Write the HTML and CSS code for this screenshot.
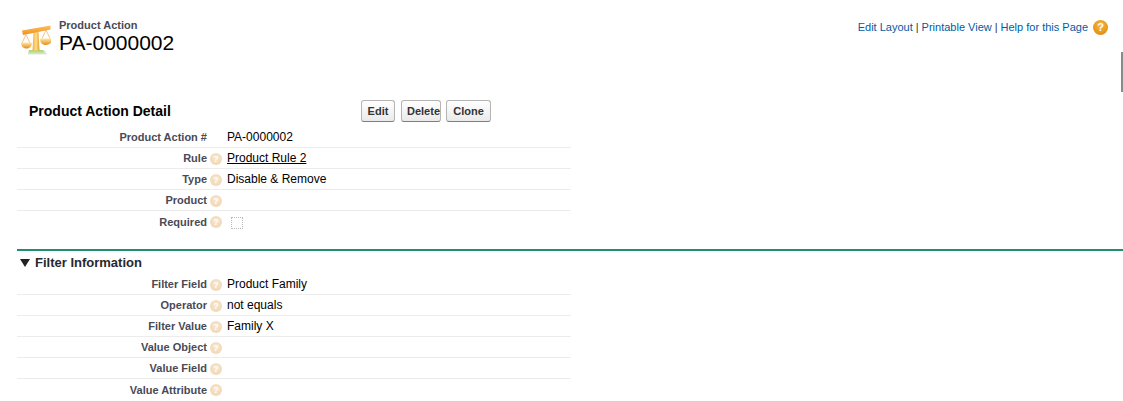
FILE: index.html
```html
<!DOCTYPE html>
<html lang="en">
<head>
<meta charset="utf-8">
<title>Product Action PA-0000002</title>
<link rel="stylesheet" href="styles.css">
</head>
<body>
<header class="page-head">
  <svg class="scale" width="30" height="33" viewBox="0 0 30 33" aria-hidden="true">
    <defs>
      <linearGradient id="beam" x1="0" y1="0" x2="0" y2="1"><stop offset="0" stop-color="#fbc25f"/><stop offset="1" stop-color="#ee8f1c"/></linearGradient>
      <linearGradient id="post" x1="0" y1="0" x2="1" y2="0"><stop offset="0" stop-color="#f9a93a"/><stop offset=".5" stop-color="#fde08e"/><stop offset="1" stop-color="#ef9a25"/></linearGradient>
      <linearGradient id="pan" x1="0" y1="0" x2="0" y2="1"><stop offset="0" stop-color="#fde8a8"/><stop offset="1" stop-color="#e98c1a"/></linearGradient>
      <linearGradient id="base" x1="0" y1="0" x2="0" y2="1"><stop offset="0" stop-color="#9fd46d"/><stop offset="1" stop-color="#d5ecc0"/></linearGradient>
    </defs>
    <path d="M8 26.500H24L26 30.500H7Z" fill="#c8c8c0" opacity=".5"/>
    <path d="M8 26H22L24 30H7Z" fill="url(#base)"/>
    <path d="M12.500 8H17.500L18.500 26.500H11.500Z" fill="url(#post)"/>
    <path d="M1 6.500L29.500 1.500V5.500L2 11Z" fill="url(#beam)"/>
    <path d="M5 10.500L1 19M5 10.500L9 19M25 6L21 14.500M25 6L29 14.500" stroke="#f0a860" stroke-width=".7" fill="none"/>
    <path d="M0 18.500H11C11 23 8 24.500 5.500 24.500S0 23 0 18.500Z" fill="url(#pan)"/>
    <path d="M19 14.500H31C31 19.500 28 21 25 21S19 19.500 19 14.500Z" fill="url(#pan)"/>
  </svg>
  <div class="page-title">
    <div class="page-type">Product Action</div>
    <h1 class="page-name">PA-0000002</h1>
  </div>
  <nav class="page-links">
    <a href="#">Edit Layout</a> | <a href="#">Printable View</a> | <a href="#">Help for this Page</a>
    <span class="help-main">?</span>
  </nav>
</header>

<main class="detail">
  <div class="detail-head">
    <h2 class="detail-title">Product Action Detail</h2>
    <div class="buttons">
      <button class="btn">Edit</button>
      <button class="btn">Delete</button>
      <button class="btn">Clone</button>
    </div>
  </div>

  <div class="fields">
    <div class="row"><span class="label">Product Action #</span><span class="nohelp"></span><span class="value">PA-0000002</span></div>
    <div class="row"><span class="label">Rule</span><span class="help">?</span><a class="value value-link" href="#">Product Rule 2</a></div>
    <div class="row"><span class="label">Type</span><span class="help">?</span><span class="value">Disable &amp; Remove</span></div>
    <div class="row"><span class="label">Product</span><span class="help">?</span><span class="value"></span></div>
    <div class="row row-last"><span class="label">Required</span><span class="help">?</span><span class="checkbox"></span></div>
  </div>

  <section class="section">
    <h3 class="section-title"><span class="twisty"></span>Filter Information</h3>
    <div class="fields">
      <div class="row"><span class="label">Filter Field</span><span class="help">?</span><span class="value">Product Family</span></div>
      <div class="row"><span class="label">Operator</span><span class="help">?</span><span class="value">not equals</span></div>
      <div class="row"><span class="label">Filter Value</span><span class="help">?</span><span class="value">Family X</span></div>
      <div class="row"><span class="label">Value Object</span><span class="help">?</span><span class="value"></span></div>
      <div class="row"><span class="label">Value Field</span><span class="help">?</span><span class="value"></span></div>
      <div class="row row-last"><span class="label">Value Attribute</span><span class="help">?</span><span class="value"></span></div>
    </div>
  </section>
</main>
<div class="edge-tab"></div>
</body>
</html>
```

FILE: styles.css
```css
* { box-sizing: border-box; }
html, body { height: 100%; }
body {
  margin: 0;
  background: #fff;
  color: #000;
  font-family: "Liberation Sans", Arial, sans-serif;
  font-size: 12px;
  overflow: hidden;
  position: relative;
}
.page-head {
  display: flex;
  align-items: flex-start;
  height: 100px;
  padding: 19px 15px 0 21px;
}
.scale { margin-top: 5px; flex: none; }
.page-title { margin-left: 8px; }
.page-type {
  font-size: 11px;
  font-weight: bold;
  color: #4a4a56;
  line-height: 13px;
}
.page-name {
  margin: 0;
  font-size: 21px;
  font-weight: normal;
  line-height: 22px;
}
.page-links {
  margin-left: auto;
  display: flex;
  align-items: center;
  gap: 3px;
  font-size: 11px;
  color: #333;
  line-height: 16px;
}
.page-links a { color: #015ba7; text-decoration: none; }
.help-main {
  width: 15px;
  height: 15px;
  margin-left: 2px;
  border-radius: 50%;
  background: radial-gradient(circle at 50% 35%, #f7b83f, #dd8208);
  color: #fff;
  font-size: 11px;
  font-weight: bold;
  line-height: 15px;
  text-align: center;
}
.detail { padding-left: 17px; }
.detail-head {
  display: flex;
  align-items: center;
  height: 22px;
  margin-bottom: 5px;
}
.detail-title {
  width: 344px;
  margin: 0;
  padding-left: 12px;
  font-size: 14px;
  font-weight: bold;
}
.buttons { display: flex; gap: 5px; }
.btn {
  height: 22px;
  padding: 0 5px;
  border: 1px solid #b5b5b5;
  border-bottom-color: #7f7f7f;
  border-radius: 3px;
  background: linear-gradient(#fff, #eaeaea);
  color: #333;
  font-family: inherit;
  font-size: 11px;
  font-weight: bold;
}
.btn:first-child { width: 34px; margin-right: 1px; }
.btn:nth-child(2) { width: 40px; }
.btn:nth-child(3) { width: 45px; }
.fields { width: 554px; }
.row {
  display: flex;
  align-items: center;
  height: 21px;
  border-bottom: 1px solid #ececec;
}
.row-last { border-bottom: 0; }
.label {
  width: 190px;
  text-align: right;
  font-size: 11px;
  font-weight: bold;
  color: #4a4a56;
}
.help, .nohelp {
  width: 12px;
  height: 12px;
  margin: 1px 5px 0 3px;
  flex: none;
}
.help {
  border-radius: 50%;
  background: radial-gradient(circle at 50% 40%, #f8e6cf, #efd3ae);
  color: #fff;
  font-size: 9px;
  font-weight: bold;
  line-height: 12px;
  text-align: center;
}
.value { color: #000; }
.value-link { text-decoration: underline; }
.checkbox {
  width: 12px;
  height: 12px;
  margin: 3px 0 0 4px;
  border: 1px dotted #b8b8b8;
}
.section { margin-top: 17px; }
.section-title {
  display: flex;
  align-items: center;
  height: 25px;
  margin: 0;
  border-top: 2px solid #1f8f6f;
  padding-left: 3px;
  font-size: 13px;
  font-weight: bold;
  color: #27282e;
}
.twisty {
  width: 0;
  height: 0;
  margin-right: 5px;
  border-left: 5px solid transparent;
  border-right: 5px solid transparent;
  border-top: 8px solid #222;
}
.edge-tab {
  position: absolute;
  top: 52px;
  right: 0;
  width: 2px;
  height: 40px;
  background: #8a8a8a;
}
```
